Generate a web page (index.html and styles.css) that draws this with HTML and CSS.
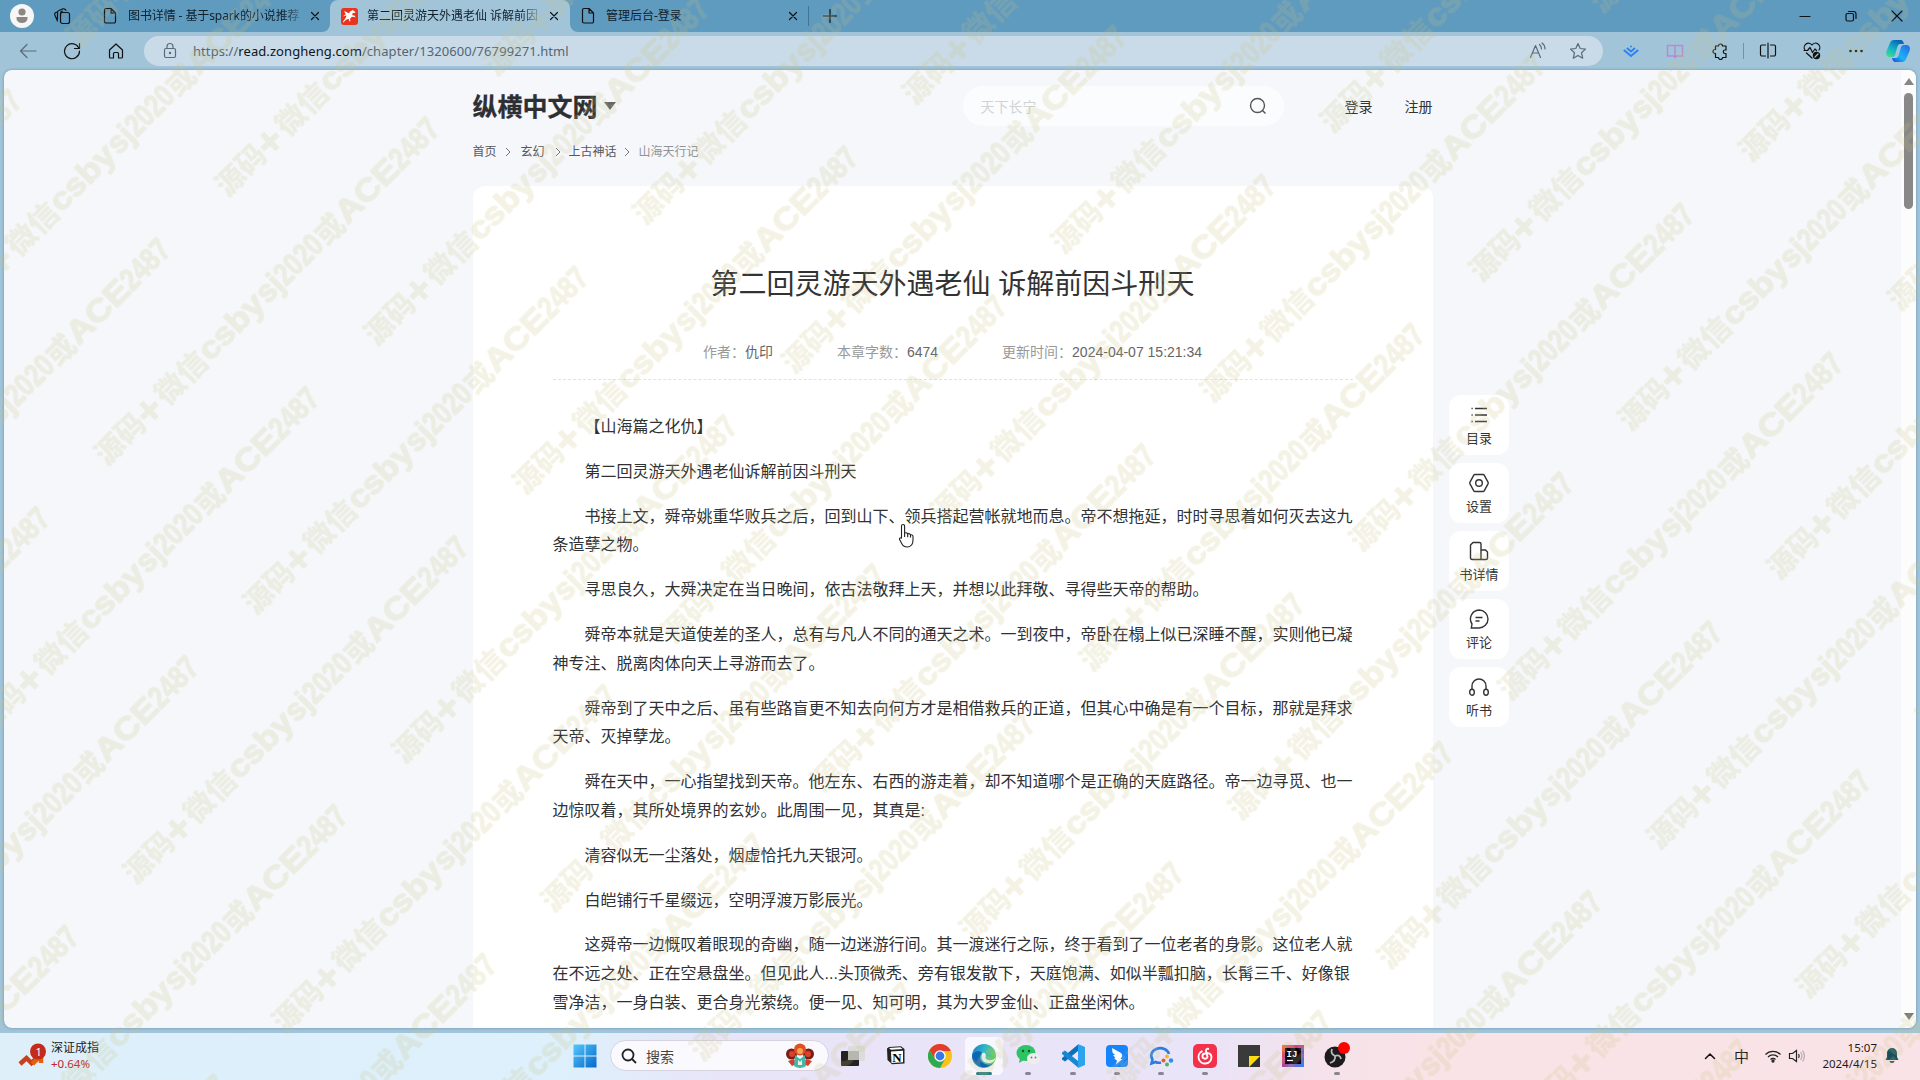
FILE: index.html
```html
<!DOCTYPE html>
<html lang="zh-CN">
<head>
<meta charset="utf-8">
<title>第二回灵游天外遇老仙 诉解前因斗刑天</title>
<link rel="stylesheet" href="styles.css">
</head>
<body>
<div class="desktop">
  <header class="tabstrip">
    <div class="strip-left">
      <span class="avatar"><svg width="24" height="24" viewBox="0 0 24 24"><circle cx="12" cy="12" r="12" fill="#f6f6f6"/><circle cx="12" cy="8" r="3.600" fill="#8d8784"/><path d="M6.500 13h11v1.500a5 4.200 0 0 1-11 0z" fill="#8d8784"/></svg></span>
      <svg class="spaces line" width="18" height="18" viewBox="0 0 18 18"><rect x="7.500" y="5.500" width="9" height="11" rx="2"/><path d="M4.500 14L1.800 8a2 2 0 0 1 1-2.500L4.300 5M13 3.200L11.500 2A2 2 0 0 0 10 1.800L6 3.500A2 2 0 0 0 4.500 5.500V12M7.500 8.500V6.500a2.500 2.500 0 0 1 2-2.500"/></svg>
      <div class="tab tab-a">
        <svg class="line" width="14" height="18" viewBox="0 0 14 18"><path d="M1.500 3a1.500 1.500 0 0 1 1.500-1.500h5l4.500 4.500v8.500a1.500 1.500 0 0 1-1.500 1.500h-8a1.500 1.500 0 0 1-1.500-1.500zM8 1.500V6h4.500"/></svg>
        <span class="tab-text">图书详情 - 基于spark的小说推荐</span>
        <svg class="line" width="10" height="10" viewBox="0 0 10 10"><path d="M1.500 1.500l7 7M8.500 1.500l-7 7"/></svg>
      </div>
    </div>
    <div class="active-wrap"><div class="tab tab-b">
      <svg width="17" height="17" viewBox="0 0 17 17"><rect width="17" height="17" rx="3" fill="#e8331e"/><path d="M3 3l5 2.200q1-2.400 3.300-2.700l.7-.9.500 1.100 2 1.300-.6.900-2-.2-.8 2.300 2.600.7 1 2-1-.6-2.800-.3-1.800 2 .2 2.800-1-.3-.6-2.500-2.700 1-2.600 2.700-.6-.6L4.600 10l1-2.500L2 8.200l2.700-2z" fill="#fff"/></svg>
      <span class="tab-text">第二回灵游天外遇老仙 诉解前因</span>
      <svg class="line" width="10" height="10" viewBox="0 0 10 10"><path d="M1.500 1.500l7 7M8.500 1.500l-7 7"/></svg>
    </div></div>
    <div class="strip-right">
      <div class="tab tab-c">
        <svg class="line" width="14" height="18" viewBox="0 0 14 18"><path d="M1.500 3a1.500 1.500 0 0 1 1.500-1.500h5l4.500 4.500v8.500a1.500 1.500 0 0 1-1.500 1.500h-8a1.500 1.500 0 0 1-1.500-1.500zM8 1.500V6h4.500"/></svg>
        <span class="tab-text">管理后台-登录</span>
        <svg class="line" width="10" height="10" viewBox="0 0 10 10"><path d="M1.500 1.500l7 7M8.500 1.500l-7 7"/></svg>
      </div>
      <span class="strip-sep"></span>
      <svg class="line plus" width="14" height="14" viewBox="0 0 14 14"><path d="M7 .5v13M.5 7h13"/></svg>
      <div class="win-buttons">
        <svg class="line" width="12" height="12" viewBox="0 0 12 12"><path d="M1 6.500h10"/></svg>
        <svg class="line" width="12" height="12" viewBox="0 0 12 12"><rect x="1" y="3.500" width="7.500" height="7.500" rx="1.500"/><path d="M3.500 1.500H8.500a2.500 2.500 0 0 1 2.500 2.500V8.500"/></svg>
        <svg class="line" width="12" height="12" viewBox="0 0 12 12"><path d="M1 1l10 10M11 1L1 11"/></svg>
      </div>
    </div>
  </header>

  <nav class="toolbar">
    <svg class="line dim" width="18" height="18" viewBox="0 0 18 18"><path d="M17 9H2M8 2.500L1.500 9 8 15.500"/></svg>
    <svg class="line" width="18" height="18" viewBox="0 0 18 18"><path d="M16 6.500A7.500 7.500 0 1 0 16.500 9M16.500 1.500v5h-5"/></svg>
    <svg class="line" width="18" height="18" viewBox="0 0 18 18"><path d="M2.500 8L9 2l6.500 6v7a1 1 0 0 1-1 1h-3v-4.500a1 1 0 0 0-1-1h-3a1 1 0 0 0-1 1V16h-3a1 1 0 0 1-1-1z"/></svg>
    <div class="address">
      <svg class="line dim" width="14" height="18" viewBox="0 0 14 18"><rect x="1.500" y="6.500" width="11" height="9" rx="1.500"/><path d="M4 6.500V4.500a3 3 0 0 1 6 0v2"/><circle cx="7" cy="11" r=".6"/></svg>
      <span class="url">https://<b>read.zongheng.com</b>/chapter/1320600/76799271.html</span>
      <svg class="line dim" width="18" height="18" viewBox="0 0 18 18"><path d="M1.500 15.500L6.500 3.500l5 12M3.300 11h6.400M10.500 2.500q2 1.500 2 4.500M13 1q3 2 3 6"/></svg>
      <svg class="line dim" width="18" height="18" viewBox="0 0 18 18"><path d="M9 1.500l2.200 5 5.300.6-4 3.600 1.200 5.500L9 13.400l-4.700 2.800 1.200-5.500-4-3.600 5.300-.6z"/></svg>
    </div>
    <div class="ext">
      <svg width="16" height="16" viewBox="0 0 16 16" fill="none" stroke="#2e82f0" stroke-width="2"><path d="M.8 7L8 13l7.200-6M4 5l4 3.500L12 5"/><circle cx="8" cy="3.500" r="1" fill="#2e82f0" stroke="none"/></svg>
      <svg width="18" height="16" viewBox="0 0 18 16" fill="none" stroke="#b48bd2" stroke-width="1.500"><path d="M9 2.500H1.500v10.500H7.500L9 14.500l1.500-1.500H16.500V2.500zV14"/></svg>
      <svg class="line" width="16" height="18" viewBox="0 0 16 18"><path d="M3.500 4h3a2 2 0 0 1 4 0h3.500v4h-1a1.700 1.700 0 0 0 0 3.500h1V15.500h-3.500a2 2 0 0 1-4 0h-3V11.500h-.5a2 2 0 0 1 0-4h.5z"/></svg>
      <span class="bar-sep"></span>
      <svg class="line" width="18" height="18" viewBox="0 0 18 18"><path d="M6.500 3H3A1.500 1.500 0 0 0 1.500 4.500v8A1.500 1.500 0 0 0 3 14h3.500M11.500 3H15a1.500 1.500 0 0 1 1.500 1.500v8a1.500 1.500 0 0 1-1.500 1.500h-3.500M9 1v15"/></svg>
      <svg class="line" width="18" height="18" viewBox="0 0 18 18"><path d="M2 8a4 4 0 0 1 7-5 4 4 0 0 1 7 5M1 8.500h3.500L7 5.500l2.500 5L12 7l1.500 1.500M3.500 11L9 16"/><circle cx="13.500" cy="13.500" r="3.700" fill="#111" stroke="none"/><path d="M12 15l3-3" stroke="#a2c4d9"/></svg>
      <svg width="16" height="16" viewBox="0 0 16 16" fill="#111"><circle cx="2.500" cy="8" r="1.300"/><circle cx="8" cy="8" r="1.300"/><circle cx="13.500" cy="8" r="1.300"/></svg>
      <svg class="copilot" width="24" height="24" viewBox="0 0 24 24"><defs><linearGradient id="cpa" x1="0" y1="1" x2=".6" y2="0"><stop offset="0" stop-color="#4be08a"/><stop offset=".5" stop-color="#13b5c4"/><stop offset="1" stop-color="#0966b8"/></linearGradient><linearGradient id="cpb" x1="1" y1="0" x2="0" y2="1"><stop offset="0" stop-color="#2467e6"/><stop offset=".6" stop-color="#1cb3f5"/><stop offset="1" stop-color="#1848d8"/></linearGradient></defs><path d="M8 1h7q2 0 3 4h-4q-2 0-3 4l-2 7q-.6 2-3 2H3q-4-1-2.500-6L4 4q1-3 4-3z" fill="url(#cpa)"/><path d="M16 23H9q-2 0-3-4h4q2 0 3-4l2-7q.6-2 3-2h3q4 1 2.500 6L20 20q-1 3-4 3z" fill="url(#cpb)"/></svg>
    </div>
  </nav>

  <div class="frame">
    <div class="page">
      <div class="site">
        <div class="site-head">
          <span class="logo">纵横中文网</span><span class="caret"></span>
          <div class="search"><span>天下长宁</span><svg width="18" height="18" viewBox="0 0 18 18" fill="none" stroke="#555" stroke-width="1.400"><circle cx="8.500" cy="8.500" r="7"/><path d="M13.500 13.500l3 3"/></svg></div>
          <a class="login">登录</a><a>注册</a>
        </div>
        <div class="crumbs">
          <span>首页</span><svg width="6" height="10" viewBox="0 0 6 10"><path d="M1 1l4 4-4 4"/></svg>
          <span>玄幻</span><svg width="6" height="10" viewBox="0 0 6 10"><path d="M1 1l4 4-4 4"/></svg>
          <span class="c3">上古神话</span><svg width="6" height="10" viewBox="0 0 6 10"><path d="M1 1l4 4-4 4"/></svg>
          <span class="last">山海天行记</span>
        </div>
        <div class="main">
          <article class="card">
            <h1>第二回灵游天外遇老仙 诉解前因斗刑天</h1>
            <div class="meta"><span>作者：<b>仇印</b></span><span>本章字数：<b>6474</b></span><span>更新时间：<b>2024-04-07 15:21:34</b></span></div>
            <div class="text">
              <p>【山海篇之化仇】</p>
              <p>第二回灵游天外遇老仙诉解前因斗刑天</p>
              <p>书接上文，舜帝姚重华败兵之后，回到山下、领兵搭起营帐就地而息。帝不想拖延，时时寻思着如何灭去这九<br>条造孽之物。</p>
              <p>寻思良久，大舜决定在当日晚间，依古法敬拜上天，并想以此拜敬、寻得些天帝的帮助。</p>
              <p>舜帝本就是天道使差的圣人，总有与凡人不同的通天之术。一到夜中，帝卧在榻上似已深睡不醒，实则他已凝<br>神专注、脱离肉体向天上寻游而去了。</p>
              <p>舜帝到了天中之后、虽有些路盲更不知去向何方才是相借救兵的正道，但其心中确是有一个目标，那就是拜求<br>天帝、灭掉孽龙。</p>
              <p>舜在天中，一心指望找到天帝。他左东、右西的游走着，却不知道哪个是正确的天庭路径。帝一边寻觅、也一<br>边惊叹着，其所处境界的玄妙。此周围一见，其真是:</p>
              <p>清容似无一尘落处，烟虚恰托九天银河。</p>
              <p>白皑铺行千星缀远，空明浮渡万影辰光。</p>
              <p>这舜帝一边慨叹着眼现的奇幽，随一边迷游行间。其一渡迷行之际，终于看到了一位老者的身影。这位老人就<br>在不远之处、正在空悬盘坐。但见此人...头顶微秃、旁有银发散下，天庭饱满、如似半瓢扣脑，长髯三千、好像银<br>雪净洁，一身白装、更合身光萦绕。便一见、知可明，其为大罗金仙、正盘坐闲休。</p>
            </div>
          </article>
          <aside class="tools">
            <div class="tool"><svg width="20" height="20" viewBox="0 0 20 20"><path d="M6 3.500h12M6 10h12M6 16.500h12M2.500 3.500h1.200M2.500 10h1.200M2.500 16.500h1.200"/></svg>目录</div>
            <div class="tool"><svg width="20" height="20" viewBox="0 0 20 20"><path d="M6 1.500h8q.8 0 1.200.7l3.800 6.900q.4.900 0 1.800l-3.800 6.900q-.4.700-1.200.7H6q-.8 0-1.200-.7L1 10.900q-.4-.9 0-1.800l3.800-6.900q.4-.7 1.200-.7z"/><circle cx="10" cy="10" r="3.300"/></svg>设置</div>
            <div class="tool"><svg width="20" height="20" viewBox="0 0 20 20"><path d="M12 18.500H3a1.500 1.500 0 0 1-1.500-1.500V4L4 1.500h6.500A1.500 1.500 0 0 1 12 3zM12 9h4.500L18.500 11v6a1.500 1.500 0 0 1-1.500 1.500h-5"/></svg>书详情</div>
            <div class="tool"><svg width="20" height="20" viewBox="0 0 20 20"><path d="M10 1a9 9 0 1 1 0 18H2.300l.7-4A9 9 0 0 1 10 1zM6.500 8.500h7M6.500 12h4"/></svg>评论</div>
            <div class="tool"><svg width="20" height="20" viewBox="0 0 20 20"><path d="M3 12.500V9a7 7 0 0 1 14 0v3.500"/><ellipse cx="3" cy="15.200" rx="2.300" ry="3"/><ellipse cx="17" cy="15.200" rx="2.300" ry="3"/></svg>听书</div>
          </aside>
        </div>
      </div>
      <div class="scroll"><span class="up"></span><span class="thumb"></span><span class="down"></span></div>
    </div>
  </div>

  <footer class="taskbar">
    <div class="widget">
      <svg width="28" height="26" viewBox="0 0 28 26"><path d="M2 21L8.500 15l5 5L22 12" fill="none" stroke="#c8401a" stroke-width="4.500"/><path d="M14.500 21l8.500-9v8" fill="none" stroke="#e0620f" stroke-width="4.500"/><circle cx="20" cy="8.500" r="8" fill="#c42b1c"/><text x="17.500" y="12.500" class="badge">1</text></svg>
      <div class="quote"><span>深证成指</span><span class="rise">+0.64%</span></div>
    </div>
    <svg class="start" width="24" height="24" viewBox="0 0 24 24"><defs><linearGradient id="win" x1="0" y1="0" x2="1" y2="1"><stop offset="0" stop-color="#54c8fb"/><stop offset="1" stop-color="#0568cd"/></linearGradient></defs><path d="M.5.5h11v11H.5zM12.500.5h11v11h-11zM.5 12.500h11v11H.5zM12.500 12.500h11v11h-11z" fill="url(#win)"/></svg>
    <div class="find">
      <svg width="16" height="16" viewBox="0 0 16 16" fill="none" stroke="#222" stroke-width="1.800"><circle cx="7" cy="7" r="5.500"/><path d="M11 11l4 4"/></svg>
      <span>搜索</span>
      <svg width="30" height="26" viewBox="0 0 30 26"><circle cx="6.500" cy="11" r="5.500" fill="#7a1d1a"/><circle cx="23.500" cy="11" r="5.500" fill="#7a1d1a"/><circle cx="7" cy="11" r="3" fill="#d9412a"/><circle cx="23" cy="11" r="3" fill="#d9412a"/><circle cx="15" cy="6.500" r="6" fill="#e2501f"/><circle cx="15" cy="8" r="3" fill="#f2a65a"/><path d="M3 18l6-2 2 5-4 2zM27 18l-6-2-2 5 4 2z" fill="#d0402b"/><path d="M10 12l5 4 5-4 1 11q-6 4-12 0z" fill="#43b8a8"/><path d="M13 17l2 2 2-2v5h-4z" fill="#f4efe2"/></svg>
    </div>
    <div class="apps">
      <div class="app"><svg width="26" height="26" viewBox="0 0 26 26"><rect x="9" y="3" width="17" height="15" rx="1" fill="#dcdcdc"/><rect x="2" y="8" width="18" height="15" rx="1" fill="#222"/><path d="M9 8h11v9H9z" fill="#b5b5b5"/></svg></div>
      <div class="app"><svg width="24" height="24" viewBox="0 0 24 24"><path d="M3 4.500L5 3l12-.7 3.500 2.700v14.500L8 20.300 3.500 16z" fill="#222"/><path d="M7 7.500l12-.8v11.500L7.500 19z" fill="#fff"/><path d="M5 4l11.500-.8 2 1.800-11.500.8z" fill="#fff"/><text x="8.300" y="17.500" class="notion">N</text></svg></div>
      <div class="app"><svg width="24" height="24" viewBox="0 0 24 24"><circle cx="12" cy="12" r="12" fill="#fbc116"/><path d="M1.600 6A12 12 0 0 1 22.400 6L22.400 7H12L6.500 14.500z" fill="#e33b2e"/><path d="M1.600 6A12 12 0 0 0 12 24l5-9-5 2-5-2z" fill="#2da94f"/><circle cx="12" cy="12" r="5.700" fill="#fff"/><circle cx="12" cy="12" r="4.400" fill="#3b78e7"/></svg></div>
      <div class="app on"><svg width="26" height="26" viewBox="0 0 26 26"><defs><linearGradient id="ed" x1="0" y1="0" x2="1" y2=".4"><stop offset="0" stop-color="#1479c9"/><stop offset=".5" stop-color="#2fb5c9"/><stop offset="1" stop-color="#68cf59"/></linearGradient></defs><circle cx="13" cy="13" r="12" fill="url(#ed)"/><path d="M1 13C2 8 8 7 11 9.500c-3 3-3 9 3 11.500 3 1 6 1 9-2A12 12 0 0 1 1 13z" fill="#1163b4"/><path d="M11.500 10c3-1 4 2 3 5 2 3 7 3 10 0-1 4-4 5-7 5-5 0-9-4-6-10z" fill="#eaf5f8"/></svg><i></i></div>
      <div class="app"><svg width="26" height="26" viewBox="0 0 26 26"><ellipse cx="11" cy="10" rx="9.500" ry="8" fill="#2dc465"/><path d="M5 15l-1 5 5-3z" fill="#2dc465"/><circle cx="8" cy="8" r="1.200" fill="#14532d"/><circle cx="14" cy="8" r="1.200" fill="#14532d"/><ellipse cx="18.500" cy="15.500" rx="6.500" ry="5.500" fill="#eee"/><circle cx="16.500" cy="14.500" r=".9" fill="#777"/><circle cx="20.500" cy="14.500" r=".9" fill="#777"/></svg><i></i></div>
      <div class="app"><svg width="24" height="24" viewBox="0 0 24 24"><path d="M17 .5V7L4 17.500 1 15.500V14z" fill="#0f6fb8"/><path d="M17 23.500V17L4 6.500 1 8.500V10z" fill="#1787d2"/><path d="M17 0l7 3v18l-7 3z" fill="#2ba3ee"/></svg><i></i></div>
      <div class="app"><svg width="22" height="22" viewBox="0 0 22 22"><rect width="22" height="22" rx="4" fill="#1684fc"/><path d="M6 3l9 5q2 1.500 1 3.500l-1.500 2.500h2L10 19.500l1-4-3-2 1.500-.5L7 10h2L6.500 7.500z" fill="#fff"/></svg><i></i></div>
      <div class="app"><svg width="26" height="24" viewBox="0 0 26 24"><path d="M13 18.500q-3 .8-5.500-.5l-4 1.500 1-4A9 7.500 0 1 1 21 10" fill="none" stroke="#2b7de0" stroke-width="2.600"/><circle cx="19" cy="12.500" r="2" fill="#f9b42c"/><circle cx="23" cy="16.500" r="2.200" fill="#2b8ff0"/><circle cx="19" cy="20.500" r="2" fill="#48b94e"/><circle cx="15.500" cy="16.500" r="2" fill="#f0582b"/></svg><i></i></div>
      <div class="app"><svg width="24" height="24" viewBox="0 0 24 24"><rect width="24" height="24" rx="5" fill="#f5304b"/><path d="M16 5q-3-1-3 2l1.500 6a2.600 2.600 0 1 1-2.500-3.500q6-1.500 6.500 3.500a6.500 6.500 0 1 1-9-6" fill="none" stroke="#fff" stroke-width="1.900"/></svg><i></i></div>
      <div class="app"><svg width="22" height="22" viewBox="0 0 22 22"><path d="M0 0h22v11L11 22H0z" fill="#3a3a3a"/><path d="M22 11v11H11z" fill="#333"/><path d="M11 11h11L11 22z" fill="#fddc12"/></svg></div>
      <div class="app"><svg width="22" height="22" viewBox="0 0 22 22"><defs><linearGradient id="ij" x1="0" y1="0" x2="1" y2="1"><stop offset="0" stop-color="#f9742a"/><stop offset=".4" stop-color="#c33c8a"/><stop offset="1" stop-color="#2f87f6"/></linearGradient></defs><rect width="22" height="22" fill="url(#ij)"/><rect x="3" y="3" width="16" height="16" fill="#090514"/><text x="4.500" y="11.500" class="ij">IJ</text><path d="M5 15.500h6" stroke="#fff" stroke-width="1.300"/></svg></div>
      <div class="app"><svg width="28" height="28" viewBox="0 0 28 28"><circle cx="12" cy="15" r="10.500" fill="#1d1b1e"/><path d="M12 14q-5-2-3-7M12 14q5-2 6 3M12 14q1 5-5 7" fill="none" stroke="#bbb" stroke-width="1.800"/><circle cx="21" cy="6" r="6" fill="#fb0400"/></svg><i></i></div>
    </div>
    <div class="tray">
      <svg class="line" width="12" height="8" viewBox="0 0 12 8"><path d="M1.500 6.500L6 2l4.500 4.500" stroke-width="1.500"/></svg>
      <span class="ime">中</span>
      <svg width="18" height="14" viewBox="0 0 18 14" fill="none" stroke="#222" stroke-width="1.300"><path d="M1.500 5.500a10.500 10.500 0 0 1 15 0M4 8a7 7 0 0 1 10 0M6.500 10.500a3.500 3.500 0 0 1 5 0"/><circle cx="9" cy="12" r="1"/></svg>
      <svg width="18" height="14" viewBox="0 0 18 14" fill="none" stroke="#222" stroke-width="1.200"><path d="M1.500 4.500h3L8.500 1.500v11L4.500 9.500h-3zM10.500 5q1.500 2 0 4"/><path d="M12.500 3q3 4 0 8M14.500 1.500q4 5.500 0 11" stroke="#b9a9ad"/></svg>
      <div class="clock"><span>15:07</span><span>2024/4/15</span></div>
      <svg width="14" height="17" viewBox="0 0 14 17" fill="#16505c"><path d="M2 6a5 5 0 0 1 10 0v4l1.500 3H.5L2 10zM4.500 14h5a2.500 2 0 0 1-5 0z"/></svg>
    </div>
  </footer>

  <svg class="pointer" width="18" height="26" viewBox="0 0 18 26"><path d="M5 1.500q1.600 0 1.600 1.600V10q2.400-.8 3 .8 2.200-.6 2.900 1 2.500-.3 2.500 1.900V17q0 6.500-5.500 7-4 0-5.500-3L1.600 16.500q-.6-2 1.900-1.500V3.100Q3.500 1.500 5 1.500zM6.600 10v4M9.700 11v3.200M12.500 12v2.500" fill="#fff" stroke="#222" stroke-width="1.100"/></svg>

  <svg class="watermark" width="1920" height="1080">
    <defs>
      <g id="mark">
        <text x="6" y="39" textLength="58" lengthAdjust="spacingAndGlyphs">源码</text>
        <text class="lat add" x="64" y="42">+</text>
        <text x="91" y="39" textLength="61" lengthAdjust="spacingAndGlyphs">微信</text>
        <text class="lat" x="153" y="38" textLength="80" lengthAdjust="spacingAndGlyphs">csby</text>
        <text class="lat" x="234" y="38" textLength="26" lengthAdjust="spacingAndGlyphs">sj</text>
        <text class="lat" x="260" y="38" textLength="56" lengthAdjust="spacingAndGlyphs">2020</text>
        <text x="317" y="39" textLength="29" lengthAdjust="spacingAndGlyphs">或</text>
        <text class="lat" x="347" y="38" textLength="76" lengthAdjust="spacingAndGlyphs">ACE</text>
        <text class="lat" x="423" y="38" textLength="57" lengthAdjust="spacingAndGlyphs">2487</text>
      </g>
      <pattern id="marks" patternUnits="userSpaceOnUse" width="551" height="210.560" patternTransform="rotate(-45) translate(-260.500 367)">
        <use href="#mark"/>
        <use href="#mark" x="275.500" y="105.280"/>
        <use href="#mark" x="-275.500" y="105.280"/>
      </pattern>
    </defs>
    <rect width="1920" height="1080" fill="url(#marks)"/>
  </svg>
</div>
</body>
</html>
```

FILE: styles.css
```css
* { box-sizing: border-box; }
body { margin: 0; font-family: "Liberation Sans", "Noto Sans CJK SC", sans-serif; }
svg { display: block; flex: none; }
.line { fill: none; stroke: #111; stroke-width: 1.2; stroke-linecap: round; stroke-linejoin: round; }
.dim { stroke: #5b6b78; }

.desktop { position: relative; width: 1920px; height: 1080px; overflow: hidden; display: flex; flex-direction: column; background: #a2c4d9; }

/* tab strip */
.tabstrip { flex: none; height: 32px; display: flex; font: 12px "Noto Sans", "Noto Sans CJK SC", sans-serif; color: #10202c; }
.strip-left { width: 330px; display: flex; align-items: center; padding-left: 10px; background: #5f9abf; border-bottom-right-radius: 8px; }
.spaces { margin-left: 19px; }
.tab { display: flex; align-items: center; height: 32px; }
.tab-text { white-space: nowrap; line-height: 20px; }
.tab-a { margin-left: 32px; }
.tab-a .tab-text { width: 174px; margin: 0 8px 0 11px; letter-spacing: -.1px; mask-image: linear-gradient(90deg, #000 155px, transparent 178px); }
.active-wrap { width: 240px; background: #5f9abf; }
.tab-b { padding-left: 11px; background: #a2c4d9; border-radius: 8px 8px 0 0; }
.tab-b .tab-text { width: 174px; margin: 0 8px 0 9px; mask-image: linear-gradient(90deg, #000 155px, transparent 178px); }
.strip-right { flex: 1; display: flex; align-items: center; background: #5f9abf; border-bottom-left-radius: 8px; }
.tab-c { margin-left: 11px; }
.tab-c .tab-text { width: 174px; margin: 0 8px 0 11px; }
.strip-sep { width: 1px; height: 20px; margin-left: 10px; background: #3f7493; }
.plus { margin-left: 14px; }
.win-buttons { display: flex; gap: 34px; margin: 0 17px 0 auto; }

/* toolbar */
.toolbar { flex: none; height: 38px; display: flex; align-items: center; padding-left: 19px; gap: 26px; }
.address { width: 1459px; height: 30px; margin-left: -7px; padding: 0 16px 0 19px; display: flex; align-items: center; border-radius: 15px; background: #c9dbe8; }
.url { flex: 1; margin-left: 16px; font: 13px "Noto Sans", sans-serif; letter-spacing: .07px; color: #566570; }
.url b { font-weight: 400; color: #101417; }
.address .url + svg + svg { margin-left: 22px; }
.ext { display: flex; align-items: center; margin-left: -6px; }
.ext svg:nth-child(2) { margin-left: 27px; }
.ext svg:nth-child(3) { margin-left: 28px; }
.bar-sep { width: 1px; height: 16px; margin: 0 15px; background: #6f93aa; }
.ext svg:nth-child(6) { margin-left: 26px; }
.ext svg:nth-child(7) { margin-left: 27px; }
.ext .copilot { margin-left: 22px; }

/* browser page */
.frame { flex: none; height: 963px; padding: 0 4px 5px; }
.page { height: 958px; display: flex; border-radius: 8px; background: #f5f7fb; overflow: hidden; box-shadow: 0 0 3px rgba(30, 80, 120, .45); }
.site { flex: 1; padding-left: 468.5px; }
.site-head { display: flex; align-items: center; width: 960px; height: 71px; font-size: 14px; color: #333; }
.logo { margin-top: -1px; font: 700 25px/34px "Noto Sans CJK SC", sans-serif; -webkit-text-stroke: .3px #2d2f33; color: #2d2f33; }
.caret { margin-left: 6px; border: 6px solid transparent; border-top: 8px solid #666; border-bottom: 0; }
.search { width: 321px; height: 40px; margin-left: auto; padding: 0 17px 0 18px; display: flex; align-items: center; justify-content: space-between; border-radius: 20px; background: #fbfcfd; color: #d0d3d3; }
.login { margin: 0 32px 0 61px; }
.crumbs { display: flex; align-items: center; height: 18px; margin-top: 2px; font-size: 12px; line-height: 18px; color: #55585c; }
.crumbs svg { margin: 0 8px 0 10px; fill: none; stroke: #777; }
.crumbs svg:nth-of-type(1) { margin-left: 8px; margin-right: 10px; }
.crumbs svg:nth-of-type(3) { margin-left: 7px; margin-right: 9px; }
.crumbs .last { color: #909397; }
.main { display: flex; align-items: flex-start; margin-top: 25px; }
.card { width: 960px; height: 860px; padding: 79px 80px 0; border-radius: 12px; background: #fff; color: #303133; }
.card h1 { margin: 0; font-size: 28px; font-weight: 400; line-height: 40px; text-align: center; color: #333; }
.meta { display: flex; justify-content: center; gap: 64px; height: 75px; padding-top: 37px; line-height: 20px; margin-bottom: 33px; font-size: 14px; color: #999; border-bottom: 1px dashed #e2e2e2; white-space: nowrap; }
.meta b { font-weight: 400; color: #666; }
.text p { margin: 0 0 16px; font-size: 16px; line-height: 28.8px; text-indent: 2em; white-space: nowrap; }
.tools { display: flex; flex-direction: column; gap: 8px; margin: 209px 0 0 16.5px; }
.tool { width: 60px; height: 60px; padding-top: 10px; display: flex; flex-direction: column; align-items: center; gap: 4px; border-radius: 12px; background: #fff; font-size: 13px; line-height: 20px; color: #333; }
.tool svg { fill: none; stroke: #333; stroke-width: 1.4; }
.scroll { width: 15px; display: flex; flex-direction: column; align-items: center; background: #fcfcfc; }
.up { margin-top: 8px; border: 5px solid transparent; border-bottom: 7px solid #868686; border-top: 0; }
.thumb { width: 9px; height: 116px; margin-top: 8px; border-radius: 5px; background: #888; }
.down { margin: auto 0 8px; border: 5px solid transparent; border-top: 7px solid #777; border-bottom: 0; }

/* taskbar */
.taskbar { flex: none; height: 47px; padding-bottom: 2px; display: flex; align-items: center; background: linear-gradient(90deg, #deeffa 0, #ddf0fb 560px, #e9e5f9 720px, #e9e4f8 1200px, #f6e2ea 1330px, #f9e3e6 1440px, #fae3e7); font: 12px "Noto Sans", "Noto Sans CJK SC", sans-serif; color: #1b1b1b; }
.widget { width: 573px; display: flex; align-items: center; padding-left: 18px; gap: 5px; }
.badge { font: 11px "Noto Sans", sans-serif; fill: #fff; }
.quote { display: flex; flex-direction: column; line-height: 16px; }
.quote .rise { color: #b8282c; font-size: 11.5px; }
.find { width: 219px; height: 31px; margin-left: 13px; padding: 0 13px 0 10px; display: flex; align-items: center; border: 1px solid #d5d3e0; border-radius: 16px; background: #faf9fe; font-size: 14px; color: #444; }
.find span { flex: 1; margin-left: 9px; }
.apps { display: flex; margin-left: 1px; }
.app { width: 38px; height: 38px; margin: 0 3.05px; display: grid; place-items: center; position: relative; border-radius: 5px; }
.app.on { background: #f8f7fd; }
.app i { position: absolute; bottom: 0; left: 16px; width: 6px; height: 3px; border-radius: 2px; background: #8a8592; }
.app.on i { left: 11px; width: 16px; background: #2b7d83; }
.notion { font: bold 13px "Liberation Serif", serif; }
.ij { font: bold 9px "Liberation Mono", monospace; fill: #fff; }
.tray { display: flex; align-items: center; margin: 0 21px 0 auto; }
.ime { margin: 0 15px 0 18px; font-size: 15px; }
.tray .ime + svg + svg { margin-left: 6px; }
.clock { width: 71px; display: flex; flex-direction: column; text-align: right; line-height: 16px; font-size: 11.5px; }
.clock + svg { margin-left: 8px; }

/* overlays */
.pointer { position: absolute; left: 898px; top: 523px; }
.watermark { position: absolute; left: 0; top: 0; pointer-events: none; opacity: .2; }
.watermark text { font: 900 29px "Noto Sans CJK SC", sans-serif; fill: rgb(200, 194, 130); }
.watermark .lat { font: bold 31px "Liberation Sans", sans-serif; stroke: rgb(200, 194, 130); stroke-width: 1.3px; stroke-linejoin: round; }
.watermark .add { font-size: 40px; }
```
